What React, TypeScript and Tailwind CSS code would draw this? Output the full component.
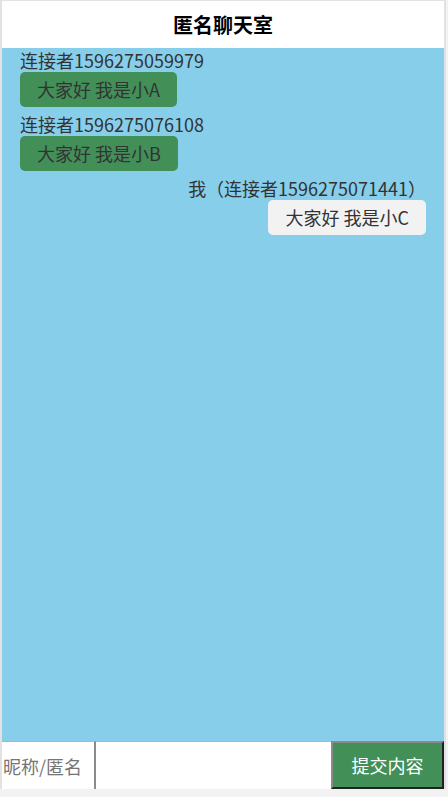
import React from "react";

const font = { fontFamily: '"Noto Sans CJK SC", "Noto Sans", sans-serif' };

type Msg = { name: string; text: string; mine?: boolean };

const msgs: Msg[] = [
  { name: "连接者1596275059979", text: "大家好 我是小A" },
  { name: "连接者1596275076108", text: "大家好 我是小B" },
  { name: "我（连接者1596275071441）", text: "大家好 我是小C", mine: true },
];

export default function App() {
  return (
    <div className="h-[797px] w-[448px] bg-[#f2f2f2] overflow-hidden" style={font}>
      <div className="w-[446px] h-[789px] flex flex-col border-x-2 border-t border-[#e2e2e2] bg-white">
        <div className="h-[47px] shrink-0 flex items-center justify-center bg-white">
          <span className="text-[20px] font-bold text-black">匿名聊天室</span>
        </div>
        <div className="flex-1 bg-[#87ceeb] px-[18px] flex flex-col">
          {msgs.map((m, i) => (
            <div key={i} className={`flex flex-col mb-[5px] ${m.mine ? "items-end" : "items-start"}`}>
              <div className="text-[18px] leading-[24px] text-[#333333] whitespace-nowrap">{m.name}</div>
              <div
                className={`text-[18px] leading-[25px] py-[5px] px-[17px] rounded-[5px] text-[#333333] whitespace-nowrap ${
                  m.mine ? "bg-[#f2f2f2]" : "bg-[#428f58]"
                }`}
              >
                {m.text}
              </div>
            </div>
          ))}
        </div>
        <div className="h-[48px] shrink-0 flex">
          <input
            className="w-[94px] h-full border-t border-r-2 border-t-[#b5b5b5] border-r-[#8a8a8a] bg-white text-[18px] pl-[1px] text-[#333] placeholder:text-[#757575] outline-none"
            placeholder="昵称/匿名"
            style={font}
          />
          <input
            className="flex-1 min-w-0 h-full border-t border-t-[#b5b5b5] bg-white text-[18px] outline-none"
            style={font}
          />
          <button
            className="w-[113px] h-full bg-[#428f58] text-white text-[18px] border-2 border-l-[#8a8a8a] border-t-[#8a8a8a] border-r-[#222] border-b-[#222]"
            style={font}
          >
            提交内容
          </button>
        </div>
      </div>
    </div>
  );
}
